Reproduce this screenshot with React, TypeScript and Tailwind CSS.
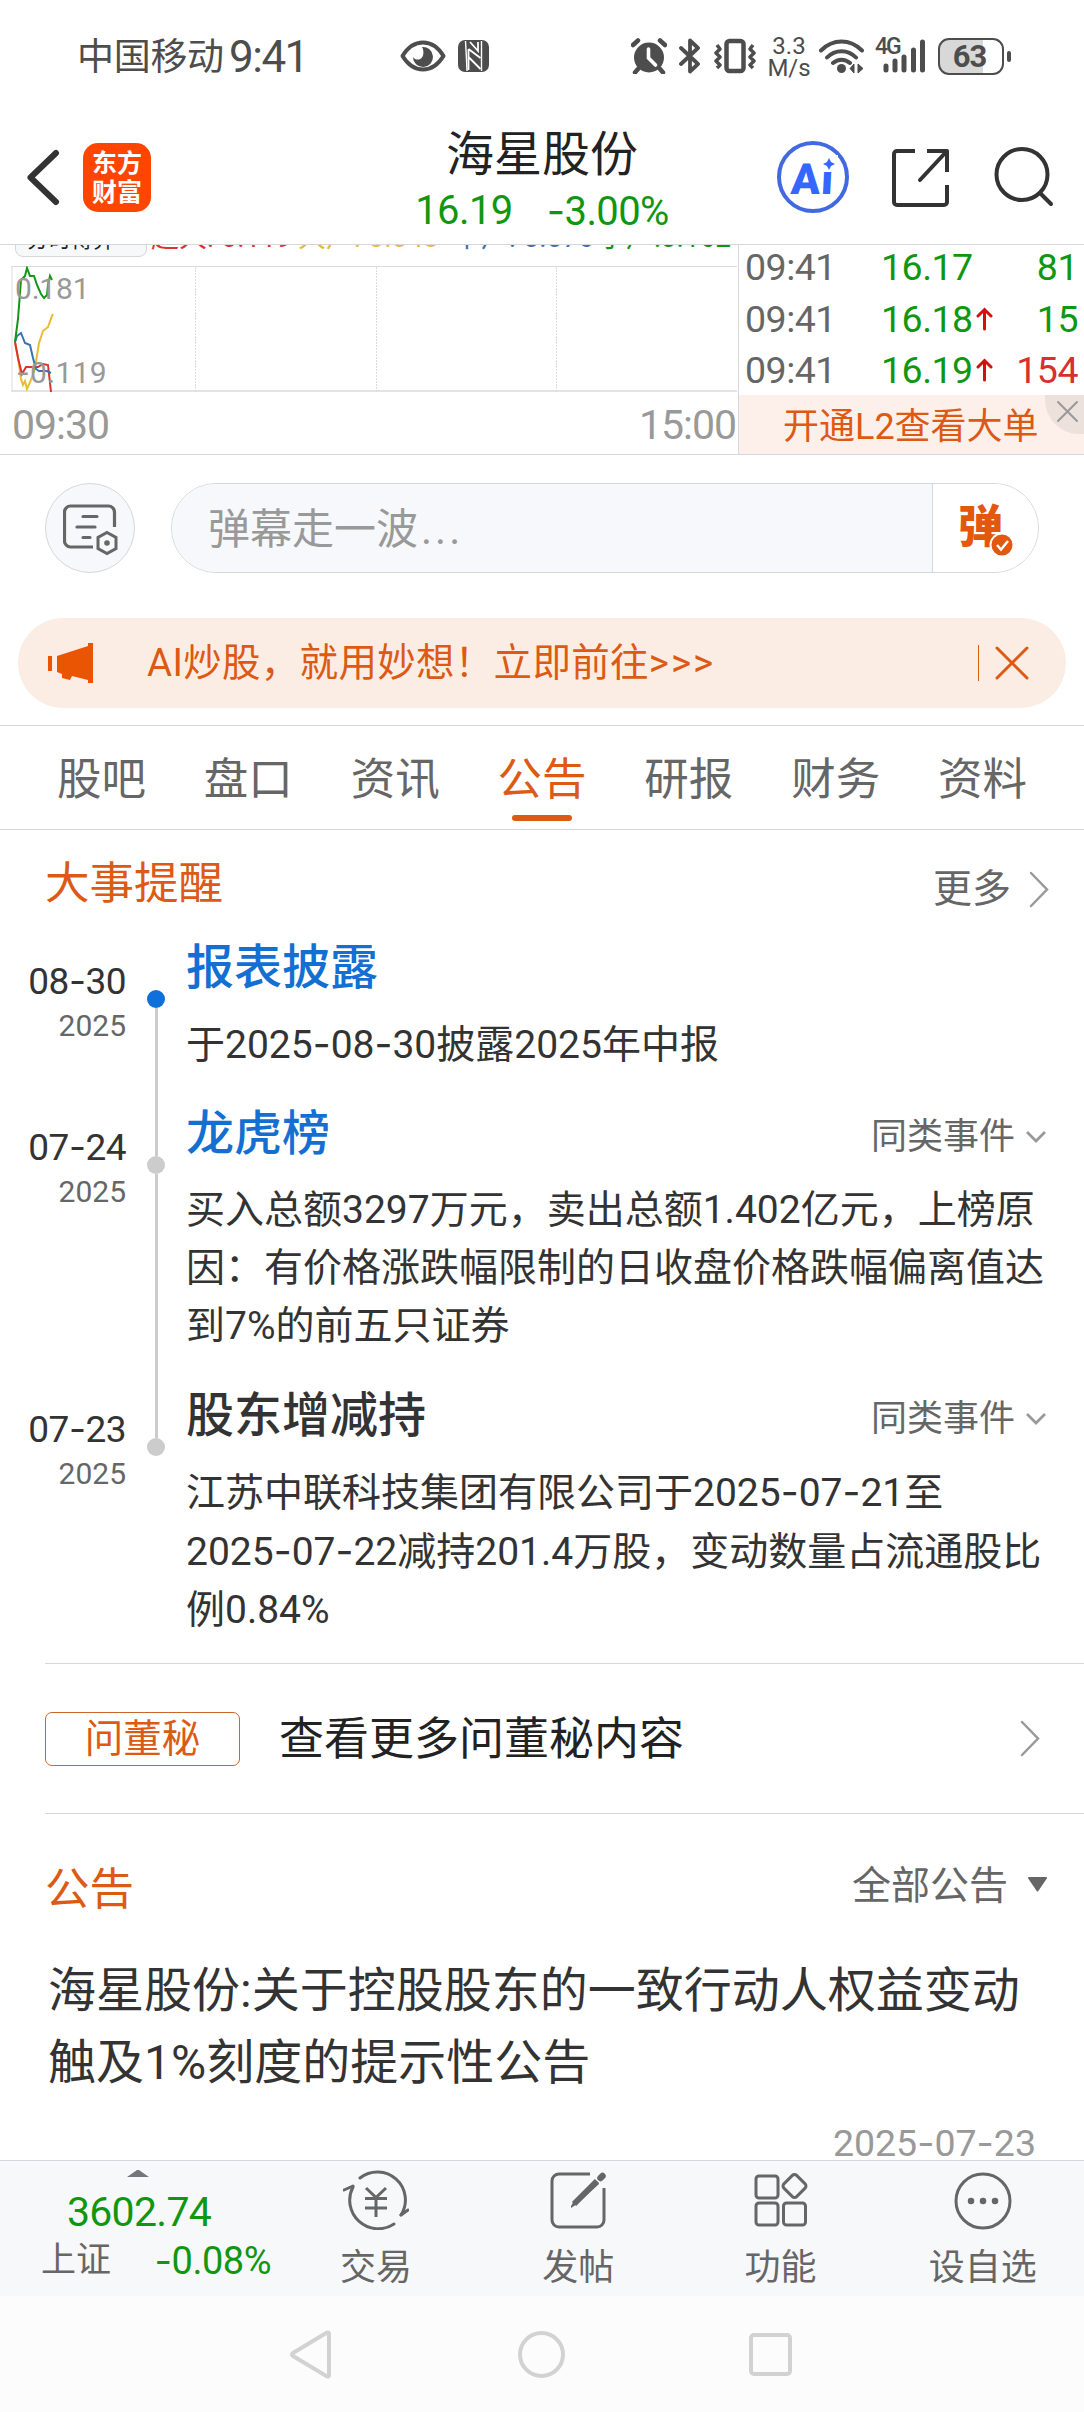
import { Fragment, type ReactNode } from "react";

const tabs = ["股吧", "盘口", "资讯", "公告", "研报", "财务", "资料"];

const trades = [
  { time: "09:41", price: "16.17", up: false, volume: "81", buy: false },
  { time: "09:41", price: "16.18", up: true, volume: "15", buy: false },
  { time: "09:41", price: "16.19", up: true, volume: "154", buy: true },
];

const events = [
  {
    date: "08-30",
    year: "2025",
    title: "报表披露",
    link: true,
    more: false,
    lines: ["于2025-08-30披露2025年中报"],
    height: "h-[166px]",
  },
  {
    date: "07-24",
    year: "2025",
    title: "龙虎榜",
    link: true,
    more: true,
    lines: [
      "买入总额3297万元，卖出总额1.402亿元，上榜原",
      "因：有价格涨跌幅限制的日收盘价格跌幅偏离值达",
      "到7%的前五只证券",
    ],
    height: "h-[282px]",
  },
  {
    date: "07-23",
    year: "2025",
    title: "股东增减持",
    link: false,
    more: true,
    lines: [
      "江苏中联科技集团有限公司于2025-07-21至",
      "2025-07-22减持201.4万股，变动数量占流通股比",
      "例0.84%",
    ],
    height: "h-[278px]",
  },
];

/* Roboto's hyphen is too short next to the digits, Inter has a wider one */
function Num({ children }: { children: string }) {
  return (
    <>
      {children.split("-").map((part, i) => (
        <Fragment key={i}>
          {i > 0 && <span className="font-['Inter']">-</span>}
          {part}
        </Fragment>
      ))}
    </>
  );
}

function StatusBar() {
  return (
    <div className="flex h-[112px] items-center pl-[77px] text-[#4d4d4d]">
      <span className="w-[152px] pt-[2px] text-[37px] leading-none tracking-[-0.3px]">中国移动</span>
      <span className="w-[171px] pt-[2px] text-[44px] leading-none tracking-[-1.5px]">9:41</span>
      <svg width="46" height="32" viewBox="0 0 46 32" fill="none">
        <path
          d="M2.5 16C8 7 15 2.5 23 2.5S38 7 43.5 16C38 25 31 29.5 23 29.5S8 25 2.5 16Z"
          stroke="currentColor"
          strokeWidth="4"
          strokeLinejoin="round"
        />
        <path d="M22 7a10 10 0 1 1-9 10c2 3 6 3.500 8.500 1S24 10 22 7Z" fill="currentColor" />
      </svg>
      <svg className="ml-[12px]" width="31" height="32" viewBox="0 0 31 32">
        <rect width="31" height="32" rx="7" fill="currentColor" />
        <path d="M7.500 1q1 16 1.500 30M23.500 1v30" stroke="#fff" strokeWidth="1.400" fill="none" />
        <path d="M10.500 9v21M10.500 9l12 9M10.500 17l12 12M12 2l8 9V2" stroke="#fff" strokeWidth="1.800" fill="none" />
      </svg>
      <svg className="ml-[142px]" width="36" height="36" viewBox="0 0 36 36">
        <circle cx="18" cy="19.500" r="15" fill="currentColor" />
        <path d="M7 31l-3 3.500M29 31l3 3.500M2 7l5-4.500M34 7l-5-4.500" stroke="currentColor" strokeWidth="4.500" strokeLinecap="round" />
        <path d="M17.500 11v9l7 7" stroke="#fff" strokeWidth="3.600" strokeLinecap="round" fill="none" />
      </svg>
      <svg className="ml-[12px]" width="22" height="36" viewBox="0 0 22 36" fill="none">
        <path
          d="M2 10l17 16-8 7.500v-31l8 7.500L2 26"
          stroke="currentColor"
          strokeWidth="3.800"
          strokeLinejoin="round"
          strokeLinecap="round"
        />
      </svg>
      <svg className="ml-[13px]" width="42" height="36" viewBox="0 0 42 36" fill="none" stroke="currentColor">
        <rect x="12.500" y="3" width="17" height="30" rx="3" strokeWidth="4.500" />
        <path d="M3 7l3 4-4 4 4 4-4 4 4 4-3 3M39 7l-3 4 4 4-4 4 4 4-4 4 3 3" strokeWidth="3.500" strokeLinejoin="round" />
      </svg>
      <div className="ml-[13px] flex w-[40px] flex-col items-center pt-[1px] text-[24px] leading-[22px]">
        <span>3.3</span>
        <span>M/s</span>
      </div>
      <svg className="ml-[10px]" width="45" height="34" viewBox="0 0 45 34" fill="none">
        <path d="M2 11.500c12-12 29-12 41 0M8 18.500c8-8.500 21-8.500 29 0M14 24c5-4.500 12-4.500 17 0" stroke="currentColor" strokeWidth="4" strokeLinecap="round" />
        <circle cx="22.500" cy="29.500" r="4.500" fill="currentColor" />
        <path d="M35 25v9l-4-4.500zM39 34v-9l5 4.500z" fill="currentColor" stroke="currentColor" strokeWidth="1" />
      </svg>
      <div className="relative ml-[12px] h-[34px] w-[50px]">
        <span className="absolute -top-[2px] -left-[1px] text-[23px] leading-[20px] font-medium tracking-[-2px]">4G</span>
        <svg className="absolute top-0 left-[7px]" width="43" height="34" viewBox="0 0 43 34">
          <path d="M3 27v4M12 22v9M21 18v13M30.500 11v20M39.500 3v28" stroke="currentColor" strokeWidth="5" strokeLinecap="round" />
        </svg>
      </div>
      <div className="relative ml-[12px] flex h-[37px] w-[66px] items-center justify-center rounded-[11px] border-[2.500px] border-[#4d4d4d] bg-linear-to-r from-[#d8d8d8] from-70% to-white to-70%">
        <span className="-ml-[3px] text-[31px] leading-none font-bold tracking-[-1px]">63</span>
      </div>
      <div className="ml-[3px] h-[11px] w-[4px] rounded-full bg-[#4d4d4d]" />
    </div>
  );
}

function Header() {
  return (
    <header className="grid h-[133px] grid-cols-[400px_1fr_400px] border-b border-[#d5d7da]">
      <div className="flex items-start pt-[31px] pl-[26px]">
        <svg className="mt-[6px]" width="34" height="57" viewBox="0 0 34 57" fill="none">
          <path d="M30 4L4.500 28.500 30 53" stroke="#333" strokeWidth="6" strokeLinecap="round" strokeLinejoin="round" />
        </svg>
        <div className="ml-[23px] flex h-[69px] w-[68px] flex-col items-center justify-center rounded-[15px] bg-[#ff4500] text-[25px] leading-[29px] font-bold text-white">
          <span>东方</span>
          <span>财富</span>
        </div>
      </div>
      <div className="flex flex-col items-center pt-[15px] whitespace-nowrap">
        <h1 className="text-[48px] leading-[56px] text-[#222]">海星股份</h1>
        <div className="flex gap-[34px] pt-[6px] text-[40px] leading-[44px] tracking-[-0.6px] text-[#119611]">
          <span>16.19</span>
          <span>
            <Num>-3.00%</Num>
          </span>
        </div>
      </div>
      <div className="flex items-start pt-[29px] pl-[93px]">
        <div className="relative flex h-[72px] w-[72px] items-center justify-center rounded-full border-4 border-[#4169e1]">
          <span className="-skew-x-3 pt-1 text-[43px] leading-none font-black tracking-[1px] text-[#3566ff]">Ai</span>
          <svg className="absolute top-[10px] left-[39px]" width="18" height="17" viewBox="0 0 18 17">
            <rect width="18" height="17" fill="#fff" />
            <path d="M9 3l2 4 4 2-4 2-2 4-2-4-4-2 4-2z" fill="#3566ff" />
          </svg>
        </div>
        <svg className="mt-[8px] ml-[43px]" width="58" height="58" viewBox="0 0 58 58" fill="none" stroke="#333" strokeWidth="4" strokeLinecap="square">
          <path d="M21 2H5a3 3 0 0 0-3 3v48a3 3 0 0 0 3 3h47a3 3 0 0 0 3-3V38M37 2h18v19" strokeLinejoin="round" />
          <path d="M54 3L28 31" strokeLinecap="round" />
        </svg>
        <svg className="mt-[5px] ml-[44px]" width="60" height="62" viewBox="0 0 60 62" fill="none" stroke="#333" strokeWidth="4" strokeLinecap="round">
          <circle cx="28" cy="28.500" r="25.500" />
          <path d="M47 48l10 10" />
        </svg>
      </div>
    </header>
  );
}

function FlowChart() {
  return (
    <div className="flex w-[738px] flex-col">
      {/* Legend, scrolled half under the header */}
      <div className="flex h-[21px] items-start overflow-hidden text-[28px] leading-[30px] whitespace-nowrap">
        <div className="-mt-[28px] ml-[15px] h-[40px] w-[132px] shrink-0 rounded-lg border border-[#d5d7da] bg-[#f7f8fa] pt-[9px] pl-[11px] text-[22px] leading-[26px] text-[#222]">
          分时博弈
        </div>
        <span className="-mt-[22px] ml-[4px] w-[147px] shrink-0 text-[#d33]">超大:-0.119</span>
        <span className="-mt-[22px] w-[155px] shrink-0 text-[#e6bd30]">大户:-0.048</span>
        <span className="-mt-[22px] w-[145px] shrink-0 text-[#3a74b0]">中户:-0.076</span>
        <span className="-mt-[22px] shrink-0 text-[#119611]">小户:0.162</span>
      </div>
      <svg className="ml-[11px]" width="727" height="127" viewBox="0 0 727 127" fill="none">
        <path d="M1 0v125M0 .5h726" stroke="#dcdcde" />
        <path d="M0 125h726" stroke="#e3e3e5" strokeWidth="2" />
        <path d="M184.500 1v125M365.500 1v125M545.500 1v125" stroke="#dcdcde" strokeDasharray="2 1" />
        <path d="M4 76l3 15 3 22 2 6 2-4 2 8 4-9 4-12 4-25 4-12 5-4 4-11 1-2" stroke="#e6bd30" strokeWidth="2" />
        <path d="M4 76l3 16 4 16 4-7h12l5-3 5 1 1 9 2 18" stroke="#d8342c" strokeWidth="2" />
        <path d="M4 76l2-6 4-3 4 10 5 2 3 13 3 11 3 2h8l4 2" stroke="#3a74b0" strokeWidth="2" />
        <path d="M4 76l3-23 2-26 1-13 4-4 2-8 3 8h4l3 9 4 9 3 4 3-3 1-10 2-9 2 4" stroke="#139613" strokeWidth="2" />
        <text x="4" y="33" fontSize="30" fill="#999" letterSpacing="-0.200">0.181</text>
        <text x="5" y="117" fontSize="30" fill="#999" letterSpacing="0.300">
          <tspan fontFamily="Inter">-</tspan>0.119
        </text>
      </svg>
      <div className="flex justify-between pt-[8px] pr-[2px] pl-[12px] text-[41px] leading-[48px] tracking-[-1px] text-[#999]">
        <span>09:30</span>
        <span>15:00</span>
      </div>
    </div>
  );
}

function TradeList() {
  return (
    <div className="flex flex-1 flex-col border-l border-[#d5d7da]">
      <div className="-mt-[4px] flex h-[154px] flex-col text-[37.500px] tracking-[-0.5px]">
        {trades.map((t, i) => (
          <div key={i} className="flex h-[51.500px] shrink-0 items-center pt-[1px] pr-[6px] pl-[6px] leading-[44px]">
            <span className="w-[136px] text-[#666]">{t.time}</span>
            <span className="text-[#119611]">{t.price}</span>
            {t.up && (
              <svg className="ml-[3px]" width="17" height="24" viewBox="0 0 17 24" fill="none">
                <path d="M8.500 22V3M2 9l6.500-6.500L15 9" stroke="#d40f0f" strokeWidth="3" strokeLinecap="round" />
              </svg>
            )}
            <span className={t.buy ? "ml-auto text-[#d82f2f]" : "ml-auto text-[#119611]"}>{t.volume}</span>
          </div>
        ))}
      </div>
      <div className="relative flex flex-1 items-center bg-[#fdf0ea] pt-[4px] pl-[44px] text-[36px] leading-none text-[#dc5a14]">
        开通L2查看大单
        <div className="absolute top-0 right-0 flex h-[39px] w-[39px] items-center justify-center rounded-bl-[34px] bg-[#ede1dc] pb-[6px] pl-[6px]">
          <svg width="23" height="23" viewBox="0 0 23 23" fill="none">
            <path d="M2 2l19 19M21 2L2 21" stroke="#999" strokeWidth="2" strokeLinecap="round" />
          </svg>
        </div>
      </div>
    </div>
  );
}

function DanmuBar() {
  return (
    <div className="flex pt-[28px] pr-[45px] pl-[45px]">
      <div className="flex h-[90px] w-[90px] items-center justify-center rounded-full border border-[#d5d7da] bg-[#f7f8fb]">
        <svg className="mt-[4px] ml-[2px]" width="56" height="52" viewBox="0 0 56 52" fill="none" stroke="#666" strokeWidth="3.200">
          <path d="M51.500 23V8a6 6 0 0 0-6-6h-38a6 6 0 0 0-6 6v29a6 6 0 0 0 6 6H30" />
          <path d="M20 12.500h14M14 23h18M20 33.500h7" strokeLinecap="round" />
          <path d="M44 28.500l9 5v11l-9 5-9-5v-11z" strokeWidth="3" />
          <circle cx="44" cy="39" r="2.800" fill="#666" stroke="none" />
        </svg>
      </div>
      <div className="ml-[36px] flex h-[90px] flex-1 overflow-hidden rounded-full border border-[#d5d7da]">
        <div className="flex w-[760px] items-center bg-[#f7f8fb] pt-[3px] pl-[36px] text-[42px] leading-none text-[#999]">
          弹幕走一波<span className="pl-[3px] tracking-[3px]">...</span>
        </div>
        <div className="relative flex-1 border-l border-[#d5d7da] bg-white pt-[19px] pl-[25px]">
          <span className="text-[45px] leading-[50px] font-black text-[#e2580f]">弹</span>
          <svg className="absolute top-[48px] left-[56px]" width="26" height="26" viewBox="0 0 26 26" fill="none">
            <circle cx="13" cy="13" r="11.500" fill="#e2580f" stroke="#fff" strokeWidth="2" />
            <path d="M8 13l4 4.500 7-8.500" stroke="#fff" strokeWidth="2.500" />
          </svg>
        </div>
      </div>
    </div>
  );
}

function PromoBanner() {
  return (
    <div className="mx-[18px] mt-[45px] mb-[17px] flex h-[90px] items-center rounded-full bg-[#fcede4] pl-[29px] text-[#dc5a14]">
      <svg width="47" height="40" viewBox="0 0 47 40" fill="#ea5504">
        <path d="M1 13h4v15H1zM10 13l31-10V0h5v40h-5v-3l-16-4-2 4-8-2v-4l-5-2z" />
      </svg>
      <span className="ml-[53px] text-[38.500px] leading-none tracking-[0.3px] whitespace-nowrap">
        AI炒股，就用妙想！立即前往<span className="tracking-[2px]">&gt;&gt;&gt;</span>
      </span>
      <div className="ml-auto h-[36px] w-px bg-[#dc5a14]" />
      <svg className="mr-[37px] ml-[16px]" width="34" height="34" viewBox="0 0 34 34" fill="none">
        <path d="M2 2l30 30M32 2L2 32" stroke="#dc5a14" strokeWidth="3" strokeLinecap="round" />
      </svg>
    </div>
  );
}

function Tabs() {
  return (
    <nav className="flex h-[105px] border-y border-[#d5d7da] px-[28px]">
      {tabs.map((tab) => (
        <div key={tab} className="flex flex-1 flex-col items-center pt-[24px]">
          <span
            className={
              tab === "公告"
                ? "text-[44.500px] leading-[60px] text-[#dc5a14]"
                : "text-[44.500px] leading-[60px] text-[#666]"
            }
          >
            {tab}
          </span>
          {tab === "公告" && <div className="mt-[5px] h-[6px] w-[60px] rounded-full bg-[#dc5a14]" />}
        </div>
      ))}
    </nav>
  );
}

function ChevronRight() {
  return (
    <svg width="20" height="37" viewBox="0 0 20 37" fill="none">
      <path d="M2 2l16 16.500L2 35" stroke="#999" strokeWidth="2.500" strokeLinecap="round" />
    </svg>
  );
}

function EventTimeline() {
  return (
    <section>
      <div className="flex h-[107px] justify-between pr-[35px] pl-[45px]">
        <h2 className="pt-[24px] text-[44.500px] leading-[60px] text-[#dc5a14]">大事提醒</h2>
        <div className="flex h-[60px] items-center gap-[18px] pt-[59px] text-[39px] text-[#666]">
          <span className="leading-none">更多</span>
          <ChevronRight />
        </div>
      </div>
      {events.map((e, i) => (
        <div key={e.date} className={`flex ${e.height}`}>
          <div className="flex w-[126px] flex-col items-end pt-[22px]">
            <span className="text-[37px] leading-[44px] tracking-[-0.5px] text-[#333]">
              <Num>{e.date}</Num>
            </span>
            <span className="pt-[2px] text-[30px] leading-[40px] text-[#666]">{e.year}</span>
          </div>
          <div className="ml-[21px] flex w-[18px] flex-col items-center">
            <div className={i === 0 ? "h-[53px] w-[3px]" : "h-[53px] w-[3px] bg-[#ccc]"} />
            <div className={i === 0 ? "size-[18px] rounded-full bg-[#0f70dc]" : "size-[18px] rounded-full bg-[#ccc]"} />
            {i < events.length - 1 && <div className="w-[3px] flex-1 bg-[#ccc]" />}
          </div>
          <div className="ml-[21px] flex-1">
            <div className="flex h-[60px] justify-between pr-[37px]">
              <h3
                className={
                  e.link
                    ? "pt-px text-[48px] leading-[60px] font-medium text-[#146fd2]"
                    : "pt-px text-[48px] leading-[60px] font-medium text-[#333]"
                }
              >
                {e.title}
              </h3>
              {e.more && (
                <div className="flex items-center gap-[10px] pt-[7px] text-[36px] leading-none text-[#666]">
                  同类事件
                  <svg width="22" height="13" viewBox="0 0 22 13" fill="none">
                    <path d="M2 2l9 9 9-9" stroke="#999" strokeWidth="2.800" />
                  </svg>
                </div>
              )}
            </div>
            <p className="pt-[18px] text-[39px] leading-[58px] whitespace-nowrap text-[#333]">
              {e.lines.map((line) => (
                <span key={line} className="block">
                  <Num>{line}</Num>
                </span>
              ))}
            </p>
          </div>
        </div>
      ))}
    </section>
  );
}

function AskSecretary() {
  return (
    <div className="ml-[45px] flex h-[151px] items-center border-y border-[#d5d7da] pr-[44px]">
      <span className="flex h-[54px] w-[195px] items-center justify-center rounded-[7px] border border-[#c8662c] pt-[2px] text-[38.500px] leading-none text-[#dc5a14]">
        问董秘
      </span>
      <span className="mr-auto ml-[39px] pt-[2px] text-[45px] leading-none text-[#222]">查看更多问董秘内容</span>
      <ChevronRight />
    </div>
  );
}

function Notices() {
  return (
    <section className="h-[346px] overflow-hidden">
      <div className="flex justify-between pt-[42px] pr-[37px] pl-[45px]">
        <h2 className="pt-[4px] text-[44.500px] leading-[60px] text-[#dc5a14]">公告</h2>
        <div className="flex h-[60px] items-center gap-[20px] text-[39px] leading-none text-[#666]">
          全部公告
          <svg className="-mt-[4px]" width="19" height="15" viewBox="0 0 19 15">
            <path d="M1 0h17a1 1 0 0 1 .8 1.500L10.300 14a1 1 0 0 1-1.600 0L.2 1.500A1 1 0 0 1 1 0z" fill="#666" />
          </svg>
        </div>
      </div>
      <p className="pt-[35px] pl-[48px] text-[48px] leading-[72px] whitespace-nowrap text-[#333]">
        海星股份:关于控股股东的一致行动人权益变动
        <br />
        触及1%刻度的提示性公告
      </p>
      <div className="pt-[20px] pr-[48px] text-right text-[37.500px] leading-[48px] text-[#999]">
        <Num>2025-07-23</Num>
      </div>
    </section>
  );
}

function BarItem({ label, children }: { label: string; children: ReactNode }) {
  return (
    <div className="flex flex-1 flex-col items-center pt-[9px]">
      <svg width="66" height="60" viewBox="0 0 66 60" fill="none" stroke="#666" strokeWidth="3">
        {children}
      </svg>
      <span className="pt-[18px] text-[36px] leading-[40px] text-[#666]">{label}</span>
    </div>
  );
}

function BottomBar() {
  return (
    <div className="flex h-[136px] border-t border-[#d5d7da] bg-[#f7f8fa]">
      <div className="flex w-[275px] flex-col">
        <svg className="mt-[9px] ml-[127px]" width="22" height="7" viewBox="0 0 22 7">
          <path d="M0 7l9-6.300a3 3 0 0 1 4 0L22 7z" fill="#75757c" />
        </svg>
        <span className="w-[278px] pt-[11px] text-center text-[41px] leading-[48px] tracking-[-0.7px] text-[#119611]">
          3602.74
        </span>
        <div className="flex items-center justify-between pt-[2px] pr-[4px] pl-[41px] leading-[44px]">
          <span className="pt-[1px] text-[35px] text-[#666]">上证</span>
          <span className="text-[38px] tracking-[-0.5px] text-[#119611]">
            <Num>-0.08%</Num>
          </span>
        </div>
      </div>
      <BarItem label="交易">
        <path d="M17 8A28 28 0 0 1 58 45M51 54A28.500 28.500 0 0 1 10 17" strokeLinecap="round" />
        <path d="M1 20l9-4M65 40l-7 5" strokeLinecap="round" />
        <path d="M23 18l10 9.500L43 18M22 28.500h22M22 38h22M33 28v19" />
      </BarItem>
      <BarItem label="发帖">
        <path d="M45 4H14a7 7 0 0 0-7 7v39a7 7 0 0 0 7 7h38a7 7 0 0 0 7-7V18" />
        <path d="M26 36l3-5 21-21 4 4-22 20-6 4z" fill="#666" stroke="none" />
        <path d="M29 34l23-23" strokeWidth="6" />
        <path d="M55.500 8l2-2" strokeWidth="6.500" strokeLinecap="round" />
      </BarItem>
      <BarItem label="功能">
        <rect x="8" y="6" width="22" height="22" rx="3" />
        <rect x="8" y="33" width="22" height="22" rx="3" />
        <rect x="35.500" y="33" width="22" height="22" rx="3" />
        <rect x="37.500" y="7" width="18" height="18" rx="3" transform="rotate(45 46.500 16)" />
      </BarItem>
      <BarItem label="设自选">
        <circle cx="33" cy="31" r="27" />
        <path d="M21 31h.01M33 31h.01M45 31h.01" strokeWidth="6.500" strokeLinecap="round" />
      </BarItem>
    </div>
  );
}

function SystemNav() {
  return (
    <div className="flex h-[116px] items-center justify-between bg-[#fcfcfc] pr-[292px] pl-[289px]">
      <svg width="43" height="50" viewBox="0 0 43 50" fill="none">
        <path d="M38 3.500L4 24q-2 1.500 0 3L38 47.500q2 .5 2-1.500V5q0-2-2-1.500z" stroke="#d2d2d2" strokeWidth="4" />
      </svg>
      <div className="ml-[1px] size-[47px] rounded-full border-4 border-[#d2d2d2]" />
      <div className="size-[43px] rounded-[5px] border-4 border-[#d2d2d2]" />
    </div>
  );
}

export default function App() {
  return (
    <div className="h-[2412px] w-[1084px] overflow-hidden bg-white font-['Roboto','Noto_Sans_CJK_SC',sans-serif]">
      <StatusBar />
      <Header />
      <div className="flex h-[210px] border-b border-[#d5d7da]">
        <FlowChart />
        <TradeList />
      </div>
      <DanmuBar />
      <PromoBanner />
      <Tabs />
      <EventTimeline />
      <AskSecretary />
      <Notices />
      <BottomBar />
      <SystemNav />
    </div>
  );
}
